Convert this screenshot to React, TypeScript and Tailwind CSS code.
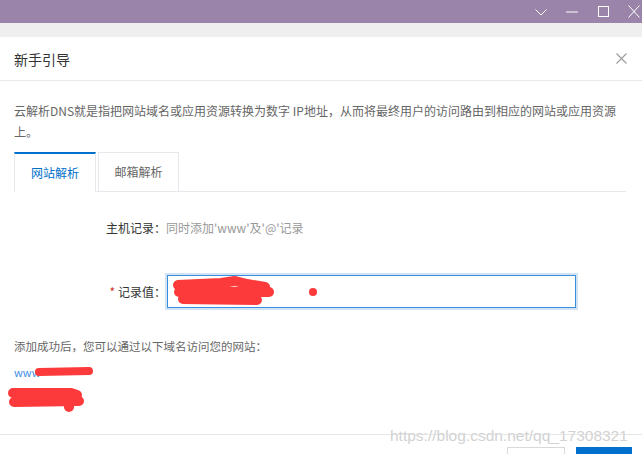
const cjk = "font-['Noto_Sans_CJK_SC','Noto_Sans',sans-serif]";

const TitleBar = () => (
  <div className="h-[23px] bg-[#9a84aa] flex items-center justify-end pr-[2px]">
    <svg width="12" height="7" viewBox="0 0 12 7" className="mr-[19px] mt-[1px]">
      <polyline points="0.5,0.5 6,6 11.5,0.5" fill="none" stroke="#fff" strokeWidth="1" />
    </svg>
    <svg width="12" height="2" viewBox="0 0 12 2" className="mr-[20px]">
      <line x1="0" y1="1" x2="12" y2="1" stroke="#fff" strokeWidth="1" />
    </svg>
    <svg width="11" height="11" viewBox="0 0 11 11" className="mr-[19px]">
      <rect x="0.5" y="0.5" width="10" height="10" fill="none" stroke="#fff" strokeWidth="1" />
    </svg>
    <svg width="12" height="13" viewBox="0 0 12 13">
      <path d="M0.5 0.5 L11.5 12.5 M11.5 0.5 L0.5 12.5" fill="none" stroke="#fff" strokeWidth="1" />
    </svg>
  </div>
);

const Scribble = ({ w, h, paths, sw }: { w: number; h: number; paths: string[]; sw: number }) => (
  <svg width={w} height={h} viewBox={`0 0 ${w} ${h}`} className="block">
    {paths.map((d) => (
      <path key={d} d={d} fill="none" stroke="#fd3a3b" strokeWidth={sw} strokeLinecap="round" strokeLinejoin="round" />
    ))}
  </svg>
);

export default function App() {
  return (
    <div className={`relative w-[642px] h-[454px] overflow-hidden bg-white ${cjk}`}>
      <TitleBar />
      <div className="h-[14px] bg-[#efefef]" />

      {/* dialog header */}
      <div className="h-[44px] flex items-center justify-between pl-[14px] pr-[15px] border-b border-[#e6eaef]">
        <span className="text-[14px] text-[#333] leading-none pt-px">新手引导</span>
        <svg width="11" height="11" viewBox="0 0 11 11">
          <path d="M0.5 0.5 L10.5 10.5 M10.5 0.5 L0.5 10.5" fill="none" stroke="#9a9a9a" strokeWidth="1.1" />
        </svg>
      </div>

      {/* dialog body */}
      <div className="h-[353px] px-[14px] pt-[19px]">
        <p className="text-[12px] leading-[21px] text-[#666]">
          <span className="whitespace-nowrap">云解析DNS就是指把网站域名或应用资源转换为数字 IP地址，从而将最终用户的访问路由到相应的网站或应用资源</span>
          <br />
          上。
        </p>

        <div className="mt-[10px] flex w-[612px] h-[40px] border-b border-[#e5e9ee]">
          <div className="w-[82px] h-[40px] -mb-px bg-white border-t-2 border-t-[#0070cc] border-x border-x-[#e5e9ee] flex items-center justify-center text-[12px] text-[#0070cc]">
            网站解析
          </div>
          <div className="ml-[2px] w-[81px] h-[39px] border-t border-x border-[#e5e9ee] flex items-center justify-center text-[12px] text-[#666]">
            邮箱解析
          </div>
        </div>

        <div className="mt-[24px] flex items-center h-[24px] text-[12px]">
          <span className="w-[152px] text-right text-[#333]">主机记录：</span>
          <span className="text-[#999]">同时添加'www'及'@'记录</span>
        </div>

        <div className="mt-[35px] flex items-center text-[12px]">
          <span className="w-[152px] text-right text-[#333]">
            <span className="text-[#d0322e] mr-[3px]">*</span>记录值：
          </span>
          <div className="ml-[1px] w-[409px] h-[33px] border border-[#3a8ee0] ring-2 ring-[#d2e3f4] flex items-center">
            <div className="flex items-center ml-[3px]">
              <Scribble
                w={106}
                h={31}
                sw={10}
                paths={["M7 9 L50 7 L64 5 L76 8 L94 11", "M8 16 L98 16", "M12 23 L86 24"]}
              />
              <span className="ml-[32px] w-[8px] h-[8px] rounded-full bg-[#fd3a3b]" />
            </div>
          </div>
        </div>

        <p className="mt-[28px] text-[11.5px] leading-[20px] text-[#666]">添加成功后，您可以通过以下域名访问您的网站：</p>

        <div className="mt-[6px] flex items-center h-[20px]">
          <span className="text-[11px] text-[#3a8ee6]">www</span>
          <div className="-ml-[6px]">
            <Scribble w={60} h={12} sw={8} paths={["M5 6 L55 5"]} />
          </div>
        </div>

        <div className="-ml-[7px] mt-[4px]">
          <Scribble w={80} h={26} sw={10} paths={["M6 7 L64 7 L70 9", "M7 16 L72 15", "M62 19 L62 21"]} />
        </div>
      </div>

      {/* footer */}
      <div className="border-t border-[#e5e5e5] flex justify-end pr-[10px] pt-[12px]">
        <button className="w-[58px] h-[32px] border border-[#d9d9d9] bg-white" />
        <button className="ml-[11px] w-[56px] h-[32px] bg-[#0070cc]" />
      </div>

      <span className="absolute left-[390px] top-[426px] text-[15.5px] leading-[20px] text-[#d2d2d2] font-['Liberation_Sans',sans-serif] [text-shadow:0_0_1px_#fff]">
        https://blog.csdn.net/qq_17308321
      </span>
    </div>
  );
}
